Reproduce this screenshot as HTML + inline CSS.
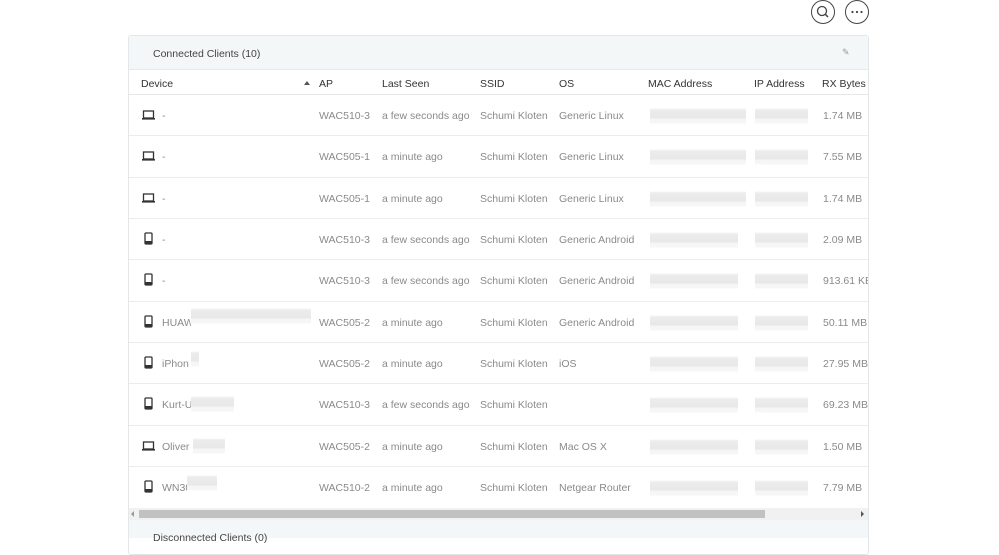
<!DOCTYPE html>
<html><head><meta charset="utf-8"><style>
*{margin:0;padding:0;box-sizing:border-box}
body{width:999px;height:538px;background:#fff;font-family:"Liberation Sans",sans-serif;position:relative;overflow:hidden}
.a{position:absolute}
.card{left:128px;top:35px;width:741px;height:520px;border:1px solid #e3e7e9;border-radius:3px;background:#fff;overflow:hidden}
.band{left:0;width:100%;height:35px;background:#f4f7f8;border-bottom:1px solid #e6eaec}
.h{font-size:10.5px;color:#333;top:78px}
.row{left:0;width:739px;height:41.33px;border-bottom:1px solid #ececec}
.c{font-size:10.5px;color:#8a8a8a;line-height:12px;top:15px!important;white-space:nowrap}
.blur{height:16px;background:linear-gradient(#fff 0,#ececec 2px,#e8e8e8 10px,#f5f5f5 11px,#f6f6f6 15px,#fff 16px)}
.circ{width:24px;height:24px;border:1.3px solid #444;border-radius:50%;top:0}
</style></head><body>
<div class="a circ" style="left:811px"><svg width="22" height="22" style="position:absolute;left:0;top:0"><circle cx="10" cy="10" r="4.5" fill="none" stroke="#444" stroke-width="1.3"/><path d="M13.3 13.3L16 16" stroke="#444" stroke-width="1.5"/></svg></div>
<div class="a circ" style="left:845px"><svg width="22" height="22" style="position:absolute;left:0;top:0"><circle cx="6.5" cy="11" r="1.1" fill="#444"/><circle cx="11" cy="11" r="1.1" fill="#444"/><circle cx="15.5" cy="11" r="1.1" fill="#444"/></svg></div>
<div class="a card"></div>
<div class="a band" style="left:129px;top:36px;width:739px;height:34px"></div>
<div class="a" style="left:153px;top:48px;font-size:10.5px;color:#444">Connected Clients (10)</div>
<div class="a" style="left:842px;top:47px;font-size:9px;color:#999">✎</div>
<div class="a" style="left:129px;top:94px;width:739px;border-top:1px solid #e6e6e6"></div>
<div class="a h" style="left:141px">Device</div>
<div class="a" style="left:304px;top:81px;width:0;height:0;border-left:3px solid transparent;border-right:3px solid transparent;border-bottom:4px solid #555"></div>
<div class="a h" style="left:319px">AP</div>
<div class="a h" style="left:382px">Last Seen</div>
<div class="a h" style="left:480px">SSID</div>
<div class="a h" style="left:559px">OS</div>
<div class="a h" style="left:648px">MAC Address</div>
<div class="a h" style="left:754px">IP Address</div>
<div class="a h" style="left:822px">RX Bytes</div>

<div class="a" style="left:129px;top:95px;width:739px;height:413px;overflow:hidden">
<div style="position:relative">
<div class="a row" style="top:0px"><svg class="a" style="left:13px;top:15px" width="14" height="10"><rect x="1.5" y="1" width="10" height="7" fill="none" stroke="#333" stroke-width="1.3"/><rect x="0" y="8" width="13" height="1.6" fill="#333"/></svg><span class="a c" style="left:33px">-</span><span class="a c" style="left:190px">WAC510-3</span><span class="a c" style="left:253px">a few seconds ago</span><span class="a c" style="left:351px">Schumi Kloten</span><span class="a c" style="left:430px">Generic Linux</span><div class="a blur" style="left:521px;top:13px;width:96px"></div><div class="a blur" style="left:626px;top:13px;width:53px"></div><span class="a c" style="left:694px">1.74 MB</span></div>
<div class="a row" style="top:41.33px"><svg class="a" style="left:13px;top:15px" width="14" height="10"><rect x="1.5" y="1" width="10" height="7" fill="none" stroke="#333" stroke-width="1.3"/><rect x="0" y="8" width="13" height="1.6" fill="#333"/></svg><span class="a c" style="left:33px">-</span><span class="a c" style="left:190px">WAC505-1</span><span class="a c" style="left:253px">a minute ago</span><span class="a c" style="left:351px">Schumi Kloten</span><span class="a c" style="left:430px">Generic Linux</span><div class="a blur" style="left:521px;top:13px;width:96px"></div><div class="a blur" style="left:626px;top:13px;width:53px"></div><span class="a c" style="left:694px">7.55 MB</span></div>
<div class="a row" style="top:82.67px"><svg class="a" style="left:13px;top:15px" width="14" height="10"><rect x="1.5" y="1" width="10" height="7" fill="none" stroke="#333" stroke-width="1.3"/><rect x="0" y="8" width="13" height="1.6" fill="#333"/></svg><span class="a c" style="left:33px">-</span><span class="a c" style="left:190px">WAC505-1</span><span class="a c" style="left:253px">a minute ago</span><span class="a c" style="left:351px">Schumi Kloten</span><span class="a c" style="left:430px">Generic Linux</span><div class="a blur" style="left:521px;top:13px;width:96px"></div><div class="a blur" style="left:626px;top:13px;width:53px"></div><span class="a c" style="left:694px">1.74 MB</span></div>
<div class="a row" style="top:124px"><svg class="a" style="left:15px;top:13px" width="9" height="14"><rect x="1" y="1" width="7" height="11" rx="1" fill="none" stroke="#333" stroke-width="1.3"/><rect x="1" y="9" width="7" height="3" fill="#333"/></svg><span class="a c" style="left:33px">-</span><span class="a c" style="left:190px">WAC510-3</span><span class="a c" style="left:253px">a few seconds ago</span><span class="a c" style="left:351px">Schumi Kloten</span><span class="a c" style="left:430px">Generic Android</span><div class="a blur" style="left:521px;top:13px;width:88px"></div><div class="a blur" style="left:626px;top:13px;width:53px"></div><span class="a c" style="left:694px">2.09 MB</span></div>
<div class="a row" style="top:165.33px"><svg class="a" style="left:15px;top:13px" width="9" height="14"><rect x="1" y="1" width="7" height="11" rx="1" fill="none" stroke="#333" stroke-width="1.3"/><rect x="1" y="9" width="7" height="3" fill="#333"/></svg><span class="a c" style="left:33px">-</span><span class="a c" style="left:190px">WAC510-3</span><span class="a c" style="left:253px">a few seconds ago</span><span class="a c" style="left:351px">Schumi Kloten</span><span class="a c" style="left:430px">Generic Android</span><div class="a blur" style="left:521px;top:13px;width:88px"></div><div class="a blur" style="left:626px;top:13px;width:53px"></div><span class="a c" style="left:694px">913.61 KB</span></div>
<div class="a row" style="top:206.67px"><svg class="a" style="left:15px;top:13px" width="9" height="14"><rect x="1" y="1" width="7" height="11" rx="1" fill="none" stroke="#333" stroke-width="1.3"/><rect x="1" y="9" width="7" height="3" fill="#333"/></svg><span class="a c" style="left:33px">HUAW</span><div class="a blur" style="left:62px;top:6px;width:120px;height:24px"></div><span class="a c" style="left:190px">WAC505-2</span><span class="a c" style="left:253px">a minute ago</span><span class="a c" style="left:351px">Schumi Kloten</span><span class="a c" style="left:430px">Generic Android</span><div class="a blur" style="left:521px;top:13px;width:88px"></div><div class="a blur" style="left:626px;top:13px;width:53px"></div><span class="a c" style="left:694px">50.11 MB</span></div>
<div class="a row" style="top:248px"><svg class="a" style="left:15px;top:13px" width="9" height="14"><rect x="1" y="1" width="7" height="11" rx="1" fill="none" stroke="#333" stroke-width="1.3"/><rect x="1" y="9" width="7" height="3" fill="#333"/></svg><span class="a c" style="left:33px">iPhon</span><div class="a blur" style="left:62px;top:8px;width:8px;height:24px"></div><span class="a c" style="left:190px">WAC505-2</span><span class="a c" style="left:253px">a minute ago</span><span class="a c" style="left:351px">Schumi Kloten</span><span class="a c" style="left:430px">iOS</span><div class="a blur" style="left:521px;top:13px;width:88px"></div><div class="a blur" style="left:626px;top:13px;width:53px"></div><span class="a c" style="left:694px">27.95 MB</span></div>
<div class="a row" style="top:289.33px"><svg class="a" style="left:15px;top:13px" width="9" height="14"><rect x="1" y="1" width="7" height="11" rx="1" fill="none" stroke="#333" stroke-width="1.3"/><rect x="1" y="9" width="7" height="3" fill="#333"/></svg><span class="a c" style="left:33px">Kurt-U</span><div class="a blur" style="left:62px;top:12px;width:43px"></div><span class="a c" style="left:190px">WAC510-3</span><span class="a c" style="left:253px">a few seconds ago</span><span class="a c" style="left:351px">Schumi Kloten</span><div class="a blur" style="left:521px;top:13px;width:88px"></div><div class="a blur" style="left:626px;top:13px;width:53px"></div><span class="a c" style="left:694px">69.23 MB</span></div>
<div class="a row" style="top:330.67px"><svg class="a" style="left:13px;top:15px" width="14" height="10"><rect x="1.5" y="1" width="10" height="7" fill="none" stroke="#333" stroke-width="1.3"/><rect x="0" y="8" width="13" height="1.6" fill="#333"/></svg><span class="a c" style="left:33px">Oliver</span><div class="a blur" style="left:64px;top:12px;width:32px"></div><span class="a c" style="left:190px">WAC505-2</span><span class="a c" style="left:253px">a minute ago</span><span class="a c" style="left:351px">Schumi Kloten</span><span class="a c" style="left:430px">Mac OS X</span><div class="a blur" style="left:521px;top:13px;width:88px"></div><div class="a blur" style="left:626px;top:13px;width:53px"></div><span class="a c" style="left:694px">1.50 MB</span></div>
<div class="a row" style="top:372px;border-bottom:none"><svg class="a" style="left:15px;top:13px" width="9" height="14"><rect x="1" y="1" width="7" height="11" rx="1" fill="none" stroke="#333" stroke-width="1.3"/><rect x="1" y="9" width="7" height="3" fill="#333"/></svg><span class="a c" style="left:33px">WN30</span><div class="a blur" style="left:58px;top:8px;width:30px;height:22px"></div><span class="a c" style="left:190px">WAC510-2</span><span class="a c" style="left:253px">a minute ago</span><span class="a c" style="left:351px">Schumi Kloten</span><span class="a c" style="left:430px">Netgear Router</span><div class="a blur" style="left:521px;top:13px;width:88px"></div><div class="a blur" style="left:626px;top:13px;width:53px"></div><span class="a c" style="left:694px">7.79 MB</span></div>
</div></div>
<div class="a" style="left:129px;top:508px;width:739px;height:12px;background:#f1f1f1"></div>
<div class="a" style="left:139px;top:510px;width:626px;height:8px;background:#c1c1c1"></div>
<div class="a" style="left:131px;top:511px;width:0;height:0;border-top:3px solid transparent;border-bottom:3px solid transparent;border-right:3px solid #999"></div>
<div class="a" style="left:861px;top:511px;width:0;height:0;border-top:3px solid transparent;border-bottom:3px solid transparent;border-left:3px solid #555"></div>
<div class="a" style="left:129px;top:520px;width:739px;height:18px;background:#f4f7f8"></div>
<div class="a" style="left:153px;top:532px;font-size:10.5px;color:#444">Disconnected Clients (0)</div>
</body></html>
